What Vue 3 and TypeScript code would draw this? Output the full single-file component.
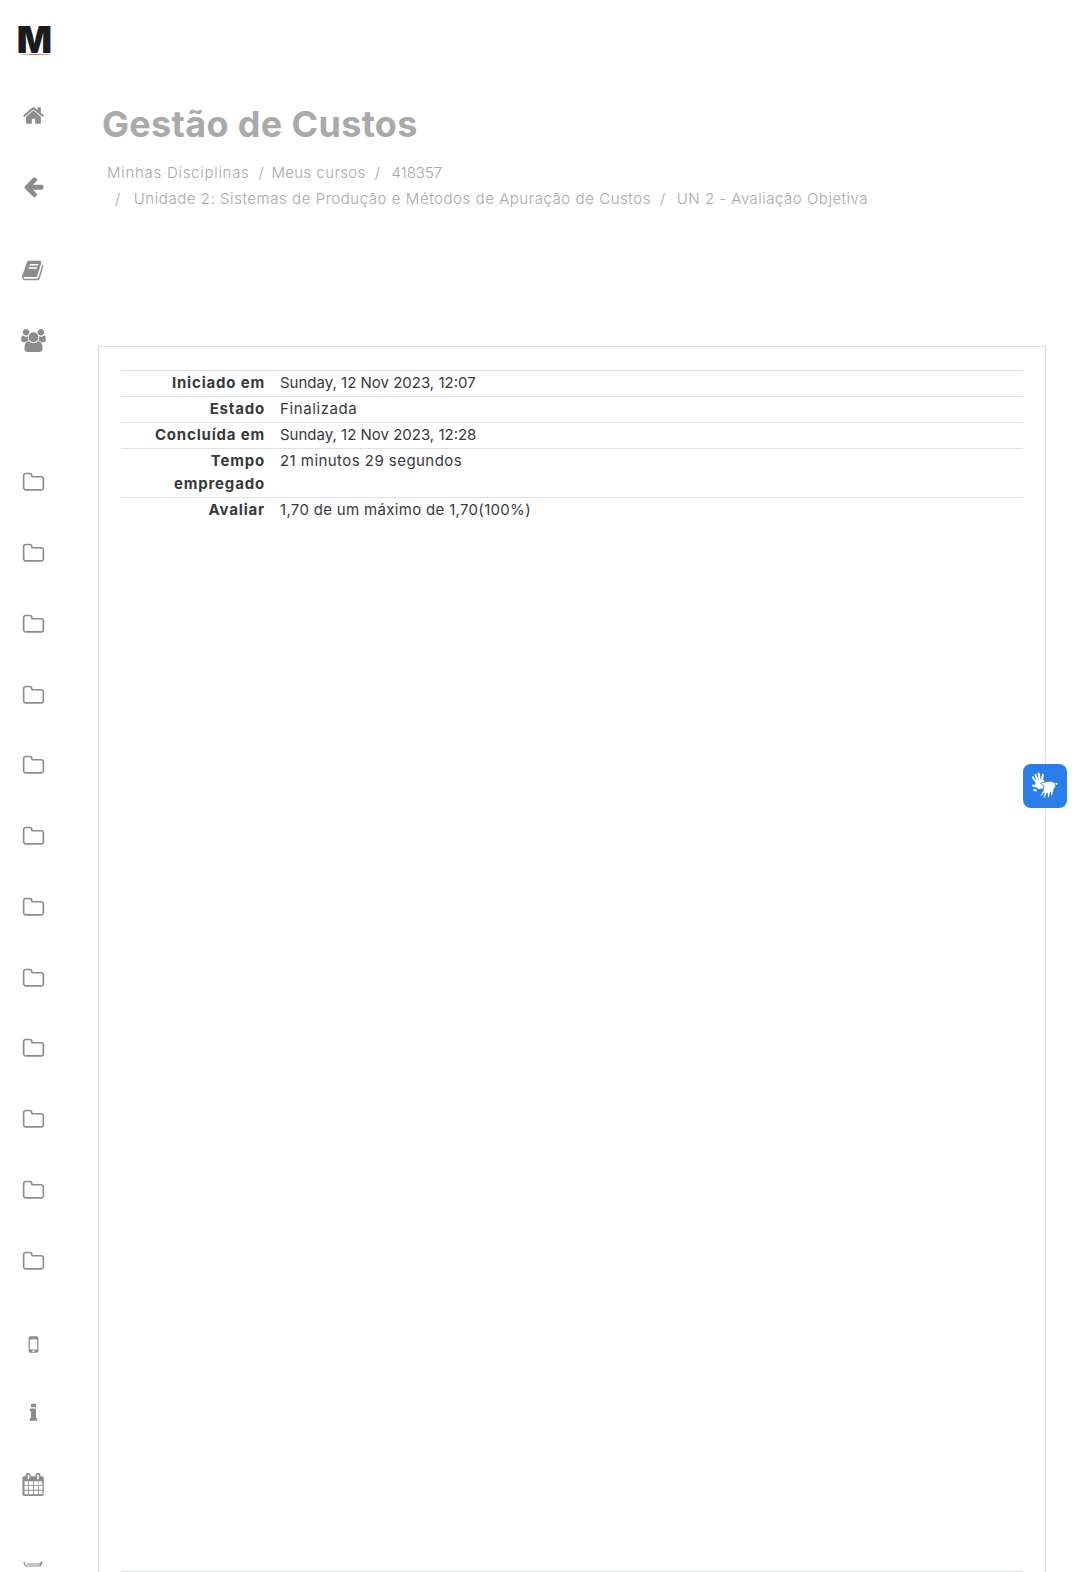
<script setup lang="ts">
interface Row { label: string; value: string; track: string }
const rows: Row[] = [
  { label: 'Iniciado em', value: 'Sunday, 12 Nov 2023, 12:07', track: 'flat' },
  { label: 'Estado', value: 'Finalizada', track: 'wide' },
  { label: 'Concluída em', value: 'Sunday, 12 Nov 2023, 12:28', track: 'flat' },
  { label: 'Tempo empregado', value: '21 minutos 29 segundos', track: 'mid' },
  { label: 'Avaliar', value: '1,70 de um máximo de 1,70(100%)', track: 'low' },
]
const folders: number[] = Array.from({ length: 12 }, (_, i) => i)
const folderPath = 'M1600 1312v-704q0-40-28-68t-68-28h-704q-40 0-68-28t-28-68v-64q0-40-28-68t-68-28h-320q-40 0-68 28t-28 68v960q0 40 28 68t68 28h1216q40 0 68-28t28-68zm128-704v704q0 92-66 158t-158 66h-1216q-92 0-158-66t-66-158v-960q0-92 66-158t158-66h320q92 0 158 66t66 158v32h672q92 0 158 66t66 158z'
</script>

<template>
  <div class="page">
    <aside class="rail">
      <div class="logo"><span class="logo-m">M</span><i class="logo-line"></i></div>
      <div class="group top-group">
        <div class="item i71"><svg class="ic" viewBox="0 0 1792 1792"><path d="M1472 992v480q0 26-19 45t-45 19h-384v-384h-256v384h-384q-26 0-45-19t-19-45v-480q0-1 .5-3t.5-3l575-474 575 474q1 2 1 6zm223-69l-62 74q-8 9-21 11h-3q-13 0-21-7l-692-577-692 577q-12 8-24 7-13-2-21-11l-62-74q-8-10-7-23.5t11-21.5l719-599q32-26 76-26t76 26l244 204v-195q0-14 9-23t23-9h192q14 0 23 9t9 23v408l219 182q10 8 11 21.5t-7 23.5z"/></svg></div>
        <div class="item i71"><svg class="ic" viewBox="0 0 1792 1792"><path d="M1664 896v128q0 53-32.5 90.5t-84.5 37.5h-704l293 294q38 36 38 90t-38 90l-75 76q-37 37-90 37-52 0-91-37l-651-652q-37-37-37-90 0-52 37-91l651-650q38-38 91-38 52 0 90 38l75 74q38 38 38 91t-38 91l-293 293h704q52 0 84.5 37.5t32.5 90.5z"/></svg></div>
      </div>
      <div class="group mid-group">
        <div class="item i70"><svg class="ic" viewBox="0 0 1792 1792"><path d="M1639 478q40 57 18 129l-275 906q-19 64-76.5 107.5t-122.5 43.5h-923q-77 0-148.5-53.5t-99.5-131.5q-24-67-2-127 0-4 3-27t4-37q1-8-3-21.5t-3-19.5q2-11 8-21t16.5-23.5 16.5-23.5q23-38 45-91.5t30-91.5q3-10 .5-30t-.5-28q3-11 17-28t17-23q21-36 42-92t25-90q1-9-2.5-32t.5-28q4-13 22-30.5t22-22.5q19-26 42.5-84.5t27.5-96.5q1-8-3-25.5t-2-26.5q2-8 9-18t18-23 17-21q8-12 16.5-30.5t15-35 16-36 19.5-32 26.5-23.5 36-11.5 47.5 5.5l-1 3q38-9 51-9h761q74 0 114 56t18 130l-274 906q-36 119-71.5 153.5t-128.5 34.5h-869q-27 0-38 15-11 16-1 43 24 70 144 70h923q29 0 56-15.5t35-41.5l300-987q7-22 5-57 38 15 59 43zm-1064 2q-4 13 2 22.5t20 9.5h608q13 0 25.5-9.5t16.5-22.5l21-64q4-13-2-22.5t-20-9.5h-608q-13 0-25.5 9.5t-16.5 22.5zm-83 256q-4 13 2 22.5t20 9.5h608q13 0 25.5-9.5t16.5-22.5l21-64q4-13-2-22.5t-20-9.5h-608q-13 0-25.5 9.5t-16.5 22.5z"/></svg></div>
        <div class="item i70"><svg class="ic ic-wide" viewBox="0 0 1920 1792"><path d="M593 896q-162 5-265 128h-134q-82 0-138-40.500t-56-118.500q0-353 124-353 6 0 43.500 21t97.500 42.500 119 21.500q67 0 133-23-5 37-5 66 0 139 81 256zm1071 637q0 120-73 189.500t-194 69.500h-874q-121 0-194-69.500t-73-189.500q0-53 3.500-103.500t14-109 26.500-108.500 43-97.500 62-81 85.500-53.500 111.500-20q10 0 43 21.500t73 48 107 48 135 21.500 135-21.500 107-48 73-48 43-21.500q61 0 111.500 20t85.500 53.500 62 81 43 97.500 26.500 108.500 14 109 3.500 103.500zm-1024-1277q0 106-75 181t-181 75-181-75-75-181 75-181 181-75 181 75 75 181zm704 384q0 159-112.500 271.500t-271.500 112.500-271.500-112.500-112.500-271.500 112.500-271.500 271.500-112.500 271.500 112.500 112.500 271.500zm576 225q0 78-56 118.500t-138 40.500h-134q-103-123-265-128 81-117 81-256 0-29-5-66 66 23 133 23 59 0 119-21.500t97.500-42.500 43.500-21q124 0 124 353zm-128-609q0 106-75 181t-181 75-181-75-75-181 75-181 181-75 181 75 75 181z"/></svg></div>
      </div>
      <div class="group folder-group">
        <div v-for="f in folders" :key="f" class="item folder"><svg class="ic" viewBox="0 0 1792 1792"><path :d="folderPath"/></svg></div>
      </div>
      <div class="group tail-group">
        <div class="item i70"><svg class="ic ic-phone" viewBox="0 0 1792 1792"><path d="M976 1408q0-33-23.500-56.500t-56.500-23.500-56.500 23.500-23.500 56.500 23.500 56.500 56.500 23.500 56.500-23.500 23.500-56.500zm208-160v-704q0-13-9.500-22.500t-22.500-9.500h-512q-13 0-22.500 9.500t-9.500 22.500v704q0 13 9.500 22.500t22.500 9.500h512q13 0 22.500-9.500t9.500-22.500zm-192-848q0-16-16-16h-160q-16 0-16 16t16 16h160q16 0 16-16zm288-16v1024q0 52-38 90t-90 38h-512q-52 0-90-38t-38-90v-1024q0-52 38-90t90-38h512q52 0 90 38t38 90z"/></svg></div>
        <div class="item i70"><svg class="ic" viewBox="0 0 1792 1792"><path d="M736 50h320q32 0 32 32v226q0 32-32 32h-320q-32 0-32-32v-226q0-32 32-32zM640 430h416q32 0 32 32v703h64q32 0 32 32v146q0 32-32 32h-512q-32 0-32-32v-146q0-32 32-32h64v-525h-64q-32 0-32-32v-146q0-32 32-32z"/></svg></div>
        <div class="item i70"><svg class="ic" viewBox="0 0 1792 1792"><path d="M192 1664h288v-288h-288v288zm352 0h320v-288h-320v288zm-352-352h288v-320h-288v320zm352 0h320v-320h-320v320zm-352-384h288v-288h-288v288zm736 736h320v-288h-320v288zm-384-736h320v-288h-320v288zm768 736h288v-288h-288v288zm-384-352h320v-320h-320v320zm-352-864v-288q0-13-9.500-22.500t-22.500-9.500h-64q-13 0-22.500 9.500t-9.500 22.500v288q0 13 9.500 22.500t22.500 9.500h64q13 0 22.500-9.500t9.500-22.500zm736 864h288v-320h-288v320zm-384-384h320v-288h-320v288zm352 0h288v-288h-288v288zm32-480v-288q0-13-9.500-22.500t-22.500-9.500h-64q-13 0-22.500 9.500t-9.500 22.500v288q0 13 9.500 22.500t22.500 9.500h64q13 0 22.500-9.500t9.500-22.500zm384-64v1280q0 52-38 90t-90 38h-1408q-52 0-90-38t-38-90v-1280q0-52 38-90t90-38h128v-96q0-66 47-113t113-47h64q66 0 113 47t47 113v96h384v-96q0-66 47-113t113-47h64q66 0 113 47t47 113v96h128q52 0 90 38t38 90z"/></svg></div>
        <div class="clipped"><svg width="20" height="6" viewBox="0 0 20 6"><path d="M1 .5q.3 4.500 3 4.500h12q2 0 3-4.500q-1 2.500-3 2.500H4" fill="none" stroke="#8c8c8c" stroke-width="1.200"/></svg></div>
      </div>
    </aside>

    <main class="main">
      <header class="head">
        <h1 class="title">Gestão de Custos</h1>
        <nav class="crumbs">
          <div class="crumb-line">
            <span class="c-home">Minhas Disciplinas</span><span class="sep tight">/</span>
            <span class="c-courses">Meus cursos</span><span class="sep">/</span>
            <span class="last num">418357</span>
          </div>
          <div class="crumb-line second">
            <span class="sep first">/</span>
            <span>Unidade 2: Sistemas de Produção e Métodos de Apuração de Custos</span><span class="sep">/</span>
            <span class="last c-quiz">UN 2 - Avaliação Objetiva</span>
          </div>
        </nav>
      </header>
      <section class="card">
        <table class="summary">
          <tbody>
            <tr v-for="r in rows" :key="r.label">
              <th>{{ r.label }}</th>
              <td :class="r.track">{{ r.value }}</td>
            </tr>
            <tr class="spacer"><th></th><td></td></tr>
          </tbody>
        </table>
      </section>
    </main>

    <button class="vlibras" type="button" aria-label="Libras">
      <svg width="44" height="44" viewBox="0 0 44 44">
        <g fill="none" stroke="#fff" stroke-linecap="round" stroke-width="2">
          <path d="M14 19 9.800 13.400"/>
          <path d="M15.200 17.500 12.400 10.800"/>
          <path d="M17 17 15.600 9.400"/>
          <path d="M18.800 17.500 19.800 10.800"/>
          <path d="M10 21.500 13 22.500"/>
          <path d="M11 26 13 26.500"/>
          <path d="M33 19.700h.6"/>
        </g>
        <path d="M13 16.500l8-.5.500 2-2.500 2 3 1-2 3.500-5 .5-3-3.500z" fill="#fff"/>
        <path d="M17.500 19.200 24 17.500q6-1.200 8 2 1.500 3-1 5.500l-1.500 6q-.4 1.500-1.500.8l-.3-4-1.600 5q-.5 1.300-1.500.6l-.1-4.500-2.500 4.600q-.8 1.100-1.500.2l.8-4.800-2.500 3.200q-1 .8-1.400-.3l2.900-5.800q-.5-2.500 1-4z" fill="#fff" stroke="#2b7de9" stroke-width=".8"/>
      </svg>
    </button>
  </div>
</template>

<style>
html, body { margin: 0; background: #fff; }
</style>

<style scoped>
.page {
  position: relative;
  display: flex;
  width: 1078px;
  height: 1572px;
  overflow: hidden;
  background: #fff;
  font-family: Inter, "Open Sans", sans-serif;
  font-size: 15px;
  color: #373a3c;
}
.rail {
  flex: 0 0 98px;
  display: flex;
  flex-direction: column;
  padding-top: 24px;
  box-sizing: border-box;
}
.logo {
  position: relative;
  width: 66px;
  height: 32px;
  display: flex;
  justify-content: center;
}
.logo-m {
  font-family: Inter, sans-serif;
  font-weight: 900;
  font-size: 37px;
  line-height: 32px;
  color: #1c1c1c;
  margin-left: 3px;
}
.logo-line {
  position: absolute;
  left: 20px;
  bottom: 1px;
  width: 31px;
  height: 1px;
  background: linear-gradient(90deg, #f3d0d0, #d9605f 50%, #f3d0d0);
}
.group { display: flex; flex-direction: column; width: 66px; }
.top-group { margin-top: 23.5px; }
.mid-group { margin-top: 14px; }
.folder-group { margin-top: 72px; }
.tail-group { margin-top: 13px; }
.item { display: flex; align-items: center; justify-content: center; }
.i71 { height: 71px; }
.i70 { height: 70px; }
.folder { height: 70.75px; }
.ic { width: 23px; height: 23px; fill: #8c8c8c; display: block; }
.ic-wide { width: 25px; height: 23px; }
.clipped { height: 47px; display: flex; align-items: flex-end; justify-content: center; }
.main {
  flex: 1 1 auto;
  min-width: 0;
  padding-right: 35px;
}
.head {
  height: 346px;
  box-sizing: border-box;
  padding-top: 101px;
}
.title {
  margin: 0 0 0 4px;
  font-size: 36px;
  line-height: 46px;
  font-weight: 700;
  letter-spacing: .33px;
  color: #aaa;
}
.crumbs {
  margin-top: 13px;
  margin-left: 9px;
  color: #a8a8a8;
  font-size: 15px;
  line-height: 26px;
  font-weight: 300;
  letter-spacing: .55px;
}
.crumb-line { display: flex; }
.crumb-line.second { padding-left: 9px; }
.sep { padding: 0 9px; }
.sep.tight { padding-right: 7px; }
.sep.first { padding-left: 0; padding-right: 13px; margin-left: -1px; }
.last { margin-left: 2px; }
.num { letter-spacing: 0; }
.c-home { letter-spacing: .72px; }
.c-courses { letter-spacing: .4px; }
.c-quiz { letter-spacing: .5px; }
.card {
  height: 1300px;
  box-sizing: border-box;
  border: 1px solid #dfdfdf;
  margin-right: -3px;
  padding: 23px 22px;
}
.summary {
  width: 100%;
  border-collapse: collapse;
  table-layout: fixed;
}
.summary th, .summary td {
  border-top: 1px solid #dee2e6;
  padding: 0 0 2px;
  line-height: 23px;
  font-size: 15px;
  vertical-align: top;
}
.summary th {
  width: 144px;
  padding-right: 15px;
  text-align: right;
  font-weight: 700;
  letter-spacing: .82px;
}
.summary td { font-weight: 400; }
.summary td.flat { letter-spacing: 0; }
.summary td.low { letter-spacing: .32px; }
.summary td.mid { letter-spacing: .45px; }
.summary td.wide { letter-spacing: .6px; }
.summary .spacer th, .summary .spacer td {
  height: 1048px;
  border-top: none;
  padding: 0;
  border-bottom: 1px solid #dee2e6;
}
.vlibras {
  position: absolute;
  left: 1023px;
  top: 764px;
  width: 44px;
  height: 44px;
  padding: 0;
  border: 0;
  border-radius: 8px;
  background: #2b7de9;
  display: block;
}
.vlibras svg { display: block; }
</style>
